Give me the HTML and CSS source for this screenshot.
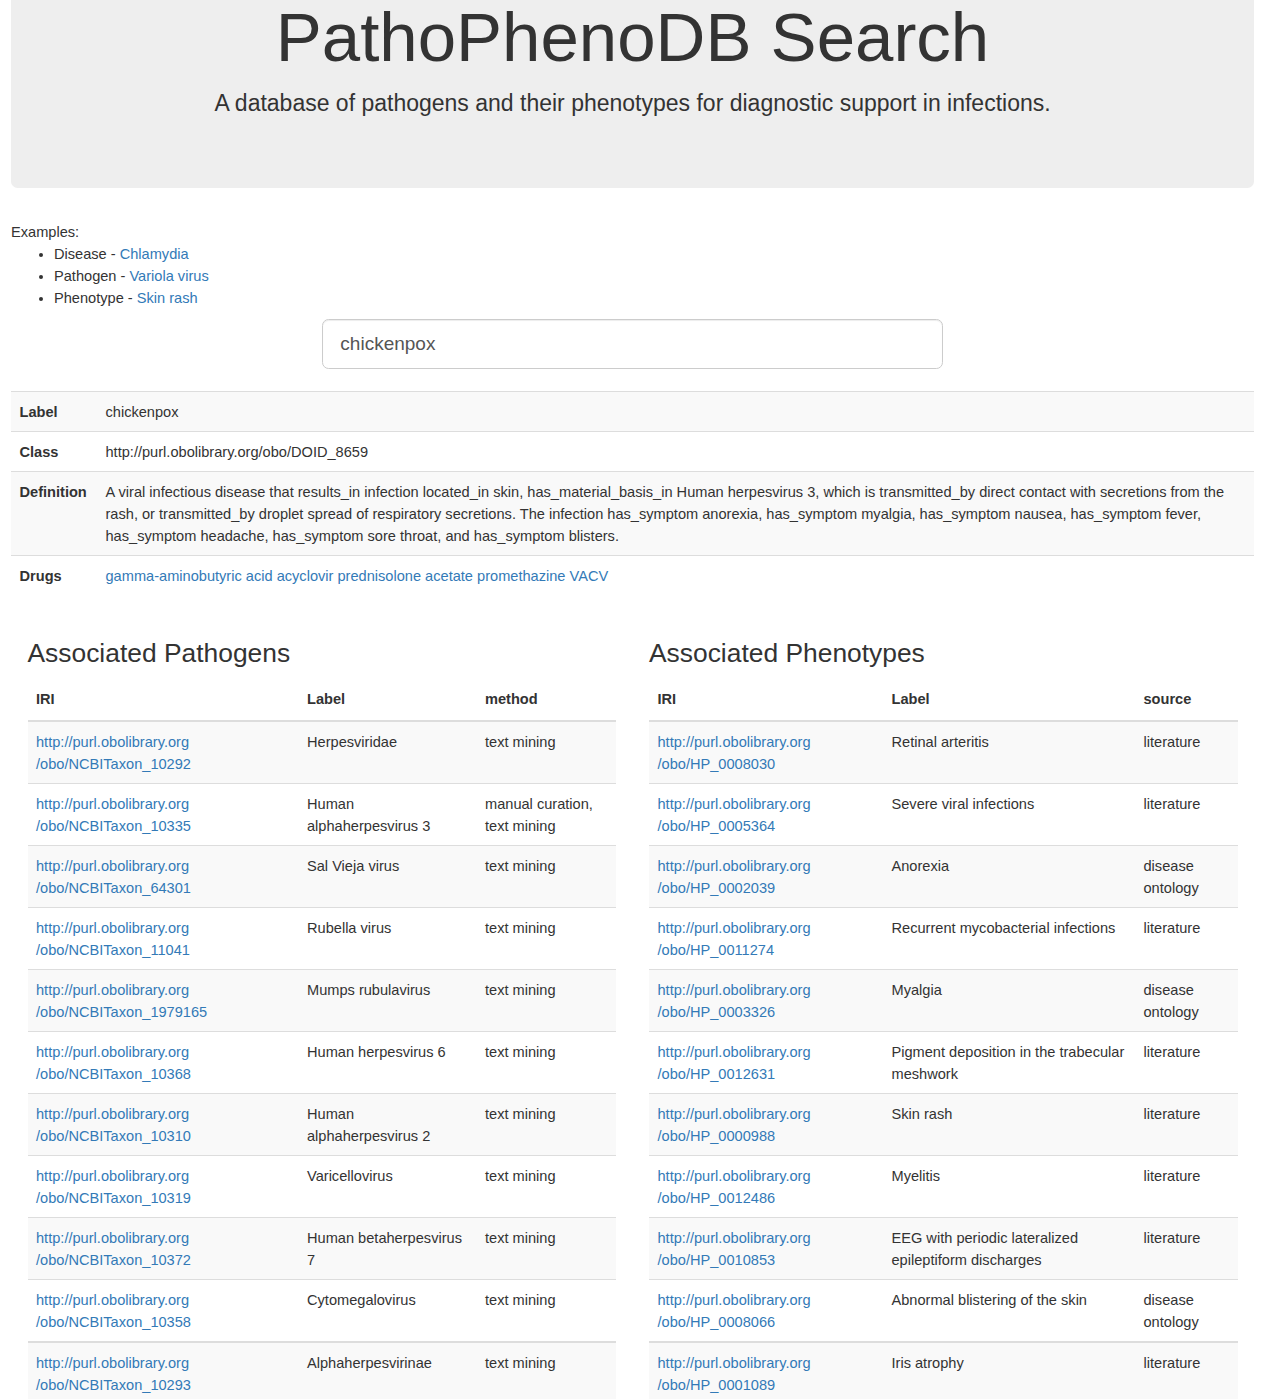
FILE: index.html
```html
<!DOCTYPE html>
<html>
<head>
<meta charset="utf-8">
<title>PathoPhenoDB Search</title>
<link rel="stylesheet" href="styles.css">
</head>
<body>
<div class="page">
  <div class="jumbotron">
    <h1 class="title">PathoPhenoDB Search</h1>
    <p class="lead">A database of pathogens and their phenotypes for diagnostic support in infections.</p>
  </div>

  <div class="examples">Examples:</div>
  <ul class="example-list">
    <li>Disease - <a href="#">Chlamydia</a></li>
    <li>Pathogen - <a href="#">Variola virus</a></li>
    <li>Phenotype - <a href="#">Skin rash</a></li>
  </ul>

  <div class="search-row">
    <input class="search-input" type="text" value="chickenpox">
  </div>

  <table class="table table-striped info-table">
    <tbody>
      <tr><th>Label</th><td>chickenpox</td></tr>
      <tr><th>Class</th><td>http://purl.obolibrary.org/obo/DOID_8659</td></tr>
      <tr><th>Definition</th><td>A viral infectious disease that results_in infection located_in skin, has_material_basis_in Human herpesvirus 3, which is transmitted_by direct contact with secretions from the rash, or transmitted_by droplet spread of respiratory secretions. The infection has_symptom anorexia, has_symptom myalgia, has_symptom nausea, has_symptom fever, has_symptom headache, has_symptom sore throat, and has_symptom blisters.</td></tr>
      <tr><th>Drugs</th><td><a href="#">gamma-aminobutyric acid</a> <a href="#">acyclovir</a> <a href="#">prednisolone acetate</a> <a href="#">promethazine</a> <a href="#">VACV</a></td></tr>
    </tbody>
  </table>

  <div class="columns">
    <div class="col">
      <h3 class="section-title">Associated Pathogens</h3>
      <table class="table table-striped assoc-table pathogens">
        <colgroup><col class="c-iri"><col class="c-label"><col class="c-extra"></colgroup>
        <thead><tr><th>IRI</th><th>Label</th><th>method</th></tr></thead>
        <tbody>
          <tr><td><a href="#">http://purl.obolibrary.org<br>/obo/NCBITaxon_10292</a></td><td>Herpesviridae</td><td>text mining</td></tr>
          <tr><td><a href="#">http://purl.obolibrary.org<br>/obo/NCBITaxon_10335</a></td><td>Human alphaherpesvirus 3</td><td>manual curation, text mining</td></tr>
          <tr><td><a href="#">http://purl.obolibrary.org<br>/obo/NCBITaxon_64301</a></td><td>Sal Vieja virus</td><td>text mining</td></tr>
          <tr><td><a href="#">http://purl.obolibrary.org<br>/obo/NCBITaxon_11041</a></td><td>Rubella virus</td><td>text mining</td></tr>
          <tr><td><a href="#">http://purl.obolibrary.org<br>/obo/NCBITaxon_1979165</a></td><td>Mumps rubulavirus</td><td>text mining</td></tr>
          <tr><td><a href="#">http://purl.obolibrary.org<br>/obo/NCBITaxon_10368</a></td><td>Human herpesvirus 6</td><td>text mining</td></tr>
          <tr><td><a href="#">http://purl.obolibrary.org<br>/obo/NCBITaxon_10310</a></td><td>Human alphaherpesvirus 2</td><td>text mining</td></tr>
          <tr><td><a href="#">http://purl.obolibrary.org<br>/obo/NCBITaxon_10319</a></td><td>Varicellovirus</td><td>text mining</td></tr>
          <tr><td><a href="#">http://purl.obolibrary.org<br>/obo/NCBITaxon_10372</a></td><td>Human betaherpesvirus 7</td><td>text mining</td></tr>
          <tr><td><a href="#">http://purl.obolibrary.org<br>/obo/NCBITaxon_10358</a></td><td>Cytomegalovirus</td><td>text mining</td></tr>
        </tbody>
        <tbody>
          <tr><td><a href="#">http://purl.obolibrary.org<br>/obo/NCBITaxon_10293</a></td><td>Alphaherpesvirinae</td><td>text mining</td></tr>
        </tbody>
      </table>
    </div>
    <div class="col">
      <h3 class="section-title">Associated Phenotypes</h3>
      <table class="table table-striped assoc-table phenotypes">
        <colgroup><col class="c-iri"><col class="c-label"><col class="c-extra"></colgroup>
        <thead><tr><th>IRI</th><th>Label</th><th>source</th></tr></thead>
        <tbody>
          <tr><td><a href="#">http://purl.obolibrary.org<br>/obo/HP_0008030</a></td><td>Retinal arteritis</td><td>literature</td></tr>
          <tr><td><a href="#">http://purl.obolibrary.org<br>/obo/HP_0005364</a></td><td>Severe viral infections</td><td>literature</td></tr>
          <tr><td><a href="#">http://purl.obolibrary.org<br>/obo/HP_0002039</a></td><td>Anorexia</td><td>disease ontology</td></tr>
          <tr><td><a href="#">http://purl.obolibrary.org<br>/obo/HP_0011274</a></td><td>Recurrent mycobacterial infections</td><td>literature</td></tr>
          <tr><td><a href="#">http://purl.obolibrary.org<br>/obo/HP_0003326</a></td><td>Myalgia</td><td>disease ontology</td></tr>
          <tr><td><a href="#">http://purl.obolibrary.org<br>/obo/HP_0012631</a></td><td>Pigment deposition in the trabecular meshwork</td><td>literature</td></tr>
          <tr><td><a href="#">http://purl.obolibrary.org<br>/obo/HP_0000988</a></td><td>Skin rash</td><td>literature</td></tr>
          <tr><td><a href="#">http://purl.obolibrary.org<br>/obo/HP_0012486</a></td><td>Myelitis</td><td>literature</td></tr>
          <tr><td><a href="#">http://purl.obolibrary.org<br>/obo/HP_0010853</a></td><td>EEG with periodic lateralized epileptiform discharges</td><td>literature</td></tr>
          <tr><td><a href="#">http://purl.obolibrary.org<br>/obo/HP_0008066</a></td><td>Abnormal blistering of the skin</td><td>disease ontology</td></tr>
        </tbody>
        <tbody>
          <tr><td><a href="#">http://purl.obolibrary.org<br>/obo/HP_0001089</a></td><td>Iris atrophy</td><td>literature</td></tr>
        </tbody>
      </table>
    </div>
  </div>
</div>
</body>
</html>
```
FILE: styles.css
```css
* { box-sizing: border-box; }
html, body { margin: 0; padding: 0; }
body {
  font-family: "Liberation Sans", Arial, Helvetica, sans-serif;
  font-size: 14.6px;
  line-height: 22px;
  color: #333;
  background: #fff;
}
a { color: #337ab7; text-decoration: none; }

.page { padding: 0 13px 0 11px; }

.jumbotron {
  background: #eee;
  border-radius: 0 0 6.6px 6.6px;
  padding: 0 66px 52px;
  margin-bottom: 34px;
  text-align: center;
}
.title {
  margin: 0 0 11px;
  font-size: 69px;
  line-height: 1.1;
  font-weight: 500;
  color: #333;
}
.lead {
  margin: 0 0 16.5px;
  font-size: 23px;
  line-height: 33px;
  font-weight: 200;
}

.examples { margin: 0; line-height: 21px; }
.example-list { margin: 0 0 10px; padding-left: 43px; }

.search-row { padding-left: 25%; width: 75%; margin-bottom: 22px; }
.search-input {
  display: block;
  width: 100%;
  height: 50px;
  padding: 11px 17.6px;
  font-family: inherit;
  font-size: 19px;
  line-height: 1.33;
  color: #555;
  background: #fff;
  border: 1px solid #ccc;
  border-radius: 6.6px;
  box-shadow: inset 0 1px 1px rgba(0,0,0,.075);
}

.table {
  width: 100%;
  border-collapse: collapse;
  border-spacing: 0;
  margin-bottom: 22px;
}
.table th, .table td {
  padding: 8.5px;
  line-height: 22px;
  vertical-align: top;
  text-align: left;
  border-top: 1px solid #ddd;
}
.table th { font-weight: bold; }
.table thead th {
  vertical-align: bottom;
  padding: 8.5px 8.5px 10.5px;
  border-top: 0;
  border-bottom: 2px solid #ddd;
}
.table tbody + tbody { border-top: 2px solid #ddd; }
.table-striped tbody tr:nth-of-type(odd) { background: #f9f9f9; }

.info-table th { width: 86px; }

.columns {
  display: grid;
  grid-template-columns: 1fr 1fr;
}
.col { padding: 0 16.5px; }
.section-title {
  margin: 22px 0 11px;
  font-size: 26.4px;
  line-height: 1.1;
  font-weight: 500;
}
.assoc-table { table-layout: fixed; }
.pathogens .c-iri { width: 271px; }
.pathogens .c-label { width: 178px; }
.phenotypes .c-iri { width: 234px; }
.phenotypes .c-label { width: 252px; }
```
